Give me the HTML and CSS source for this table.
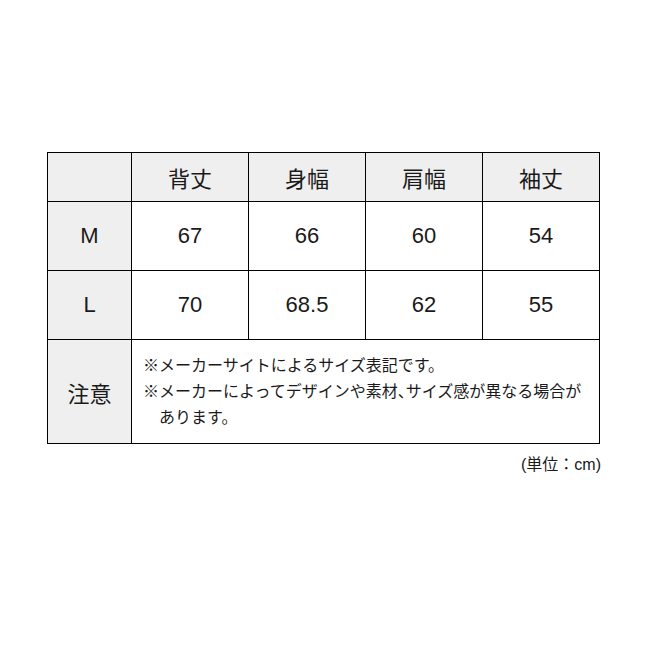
FILE: index.html
```html
<!DOCTYPE html>
<html lang="ja">
<head>
<meta charset="utf-8">
<link rel="stylesheet" href="styles.css">
</head>
<body>
<div class="wrap">
  <table class="size">
    <colgroup>
      <col class="c0"><col class="c1"><col class="c1"><col class="c1"><col class="c1">
    </colgroup>
    <tr class="head">
      <th></th><th>背丈</th><th>身幅</th><th>肩幅</th><th>袖丈</th>
    </tr>
    <tr class="row">
      <th>M</th><td>67</td><td>66</td><td>60</td><td>54</td>
    </tr>
    <tr class="row">
      <th>L</th><td>70</td><td>68.5</td><td>62</td><td>55</td>
    </tr>
    <tr class="note">
      <th>注意</th>
      <td colspan="4" class="notes">
        <p>※メーカーサイトによるサイズ表記です。</p>
        <p>※メーカーによってデザインや素材<span class="comma">、</span>サイズ感が異なる場合が<br>あります。</p>
      </td>
    </tr>
  </table>
  <div class="unit">(単位：cm)</div>
</div>
</body>
</html>
```
FILE: styles.css
```css
html, body { margin: 0; padding: 0; background: #fff; }
body {
  font-family: "Liberation Sans", "Noto Sans CJK JP", sans-serif;
  color: #1a1a1a;
}
.wrap {
  width: 553px;
  padding: 152px 0 0 47px;
}
.size {
  border-collapse: collapse;
  width: 553px;
  table-layout: fixed;
}
.c0 { width: 84px; }
.c1 { width: 117px; }
.size th, .size td {
  border: 1px solid #000;
  text-align: center;
  font-weight: normal;
  font-size: 22px;
  padding: 0;
}
.size th { background: #efefef; }
.head th { height: 48px; }
.row th, .row td { height: 68px; }
.row td { background: #fff; }
.note th { height: 103px; }
.notes {
  text-align: left !important;
  font-size: 16px !important;
  line-height: 26px;
  padding: 0 0 0 11px !important;
}
.notes p {
  margin: 0;
  padding-left: 1em;
  text-indent: -1em;
}
.comma { letter-spacing: -0.5em; }
.unit {
  text-align: right;
  font-size: 16px;
  margin-top: 7px;
  margin-right: -1px;
}
```
